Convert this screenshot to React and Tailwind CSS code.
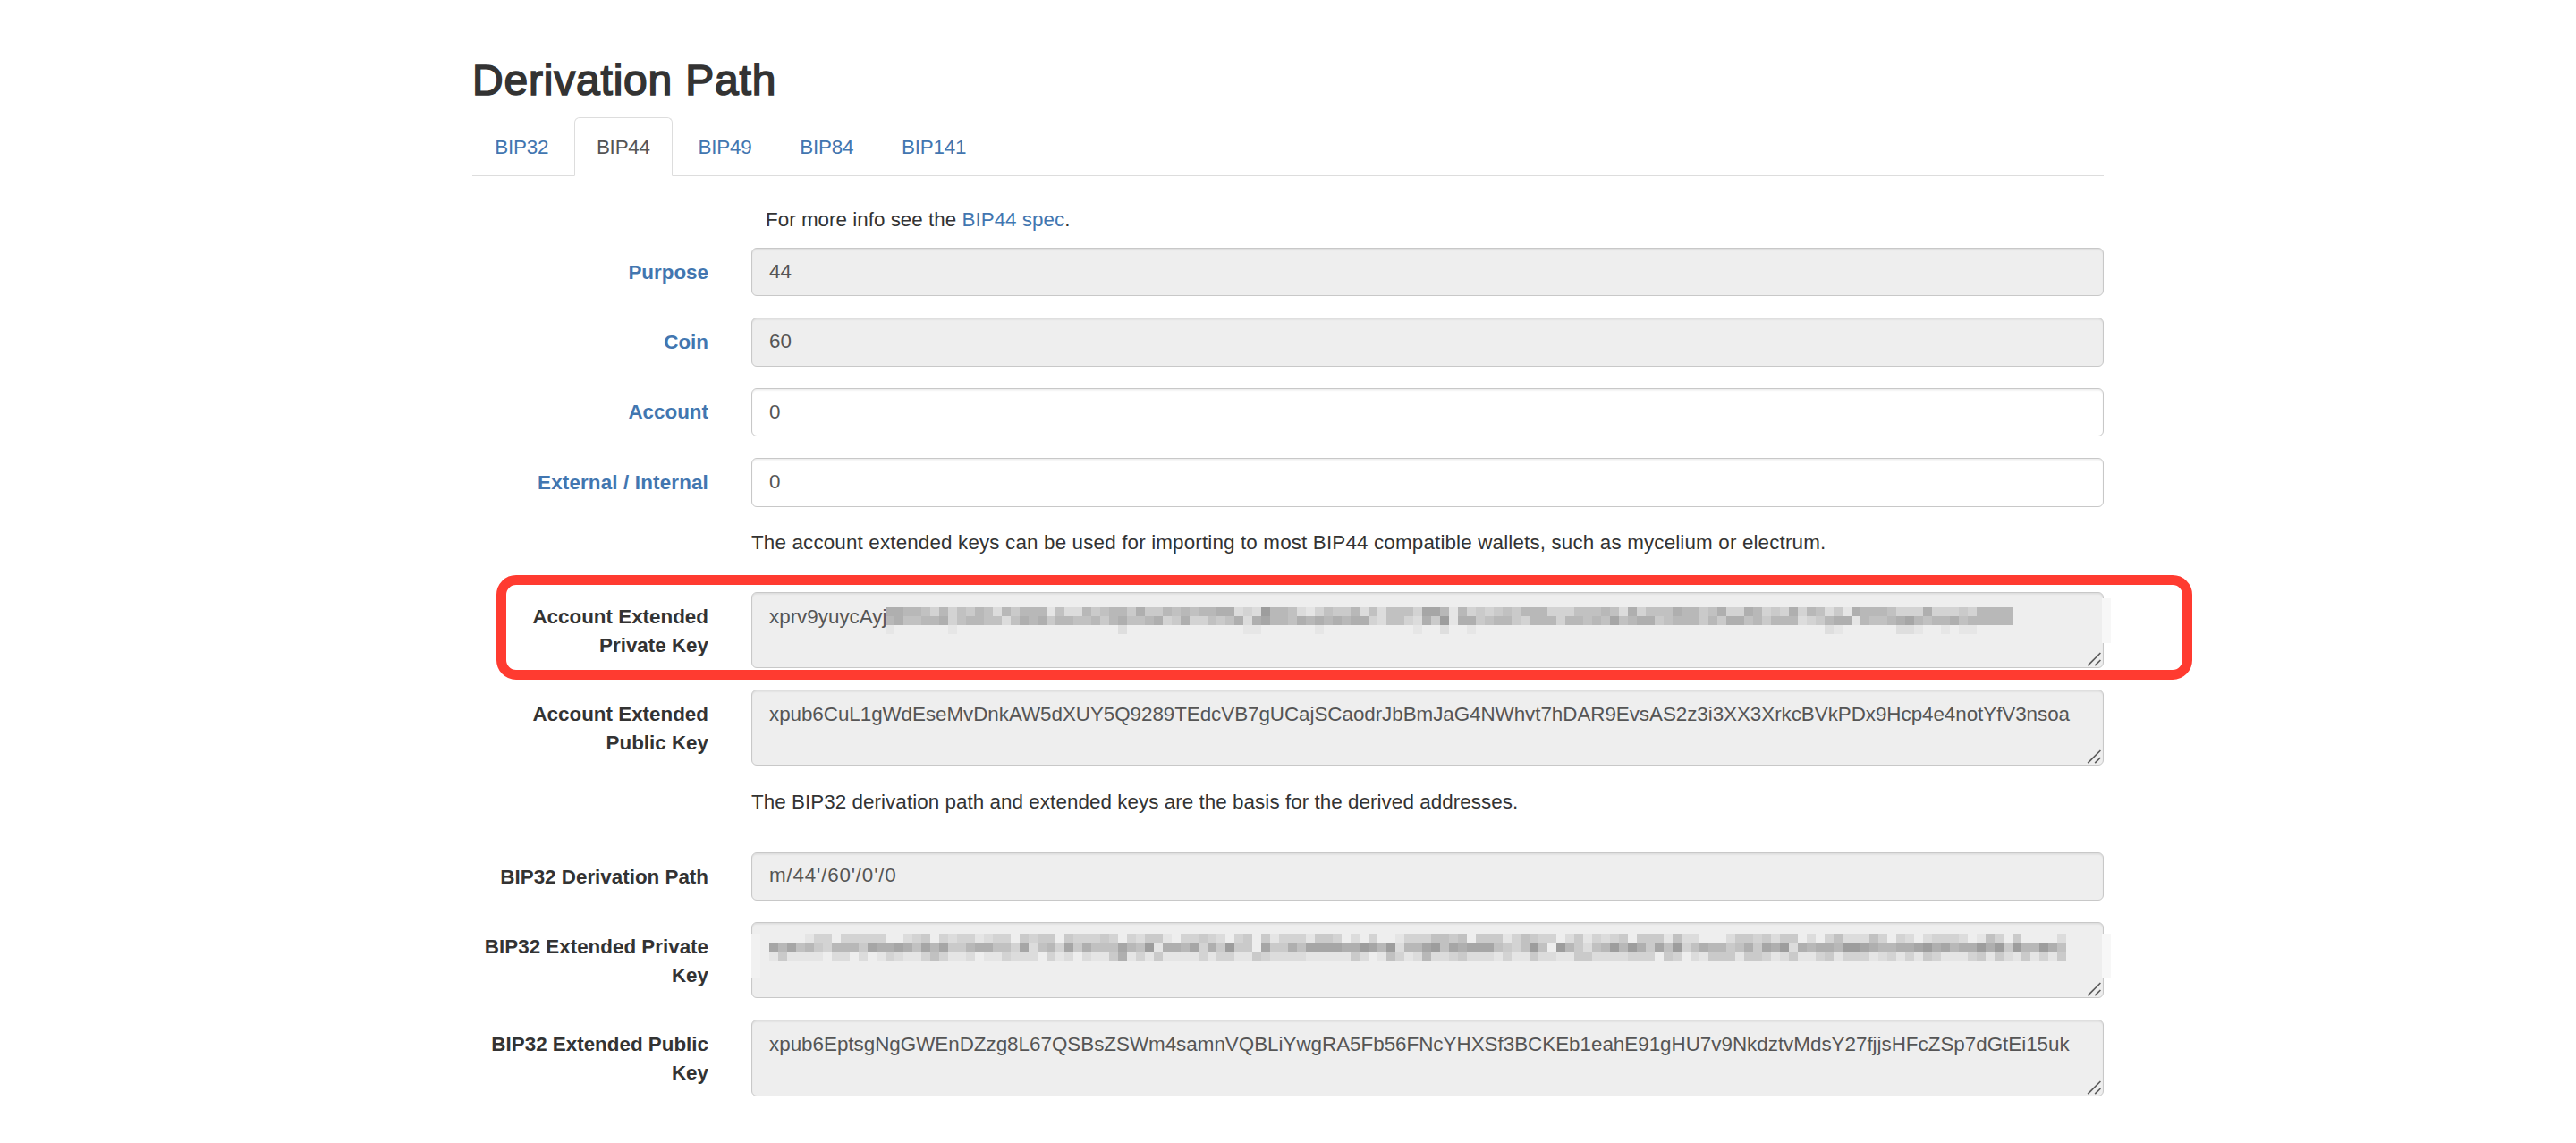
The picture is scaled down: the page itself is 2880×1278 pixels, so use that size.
const CELL = 10;

// Each digit is a darkness level of one pixelated cell; 0 is the field's own grey.
const ACCOUNT_MASK = [
  "776653635465264666152264566" +
    "47446565667723296652135446252555388616343454666333555652735557" +
    "6645733763437365241766653337333436666",
  "675566735665525767466556467" +
    "55673473354572786657676767732553274917745664366636656585677456" +
    "6646477564666234677165567865667566666",
];
const ACCOUNT_TAIL = { 0: 1, 7: 1, 26: 2, 40: 1, 41: 1, 48: 1, 59: 1, 62: 2, 65: 1, 105: 2, 106: 1, 113: 2, 114: 2, 115: 1, 118: 1, 120: 1, 121: 1 };

const BIP32_MASK = [
  "000013303333300234032331233043440433" +
    "343032441033432034041333144302030013335545044413543302413234" +
    "0444152200024434244020352225303202333201530400002",
  "868564366648778758684467755382563847" +
    "555865917768374944084475888877986926689587888543595096425696" +
    "9748593576645748792767769987667789786779794966975",
  "141111022020132113531120113222031202" +
    "114713141111313311432222111114201531262234222131142211442222" +
    "3330430214441443124113413331231314311134142141314",
];

function level(n) {
  const g = 238 - n * 9;
  return `rgb(${g},${g},${g})`;
}

function Mask({ rows, tail, className }) {
  const cols = rows[0].length;
  const height = (rows.length + (tail ? 1 : 0)) * CELL;
  return (
    <svg
      className={"absolute " + className}
      width={cols * CELL}
      height={height}
      shapeRendering="crispEdges"
    >
      {rows.map((row, y) =>
        row.split("").map((n, x) => (
          <rect key={y + "-" + x} x={x * CELL} y={y * CELL} width={CELL} height={CELL} fill={level(Number(n))} />
        ))
      )}
      {tail &&
        Object.entries(tail).map(([x, n]) => (
          <rect key={"t" + x} x={x * CELL} y={rows.length * CELL} width={CELL} height={CELL} fill={level(n * 0.9)} />
        ))}
    </svg>
  );
}

function Grip() {
  return (
    <svg className="absolute bottom-0 right-[1px]" width="17" height="17" viewBox="0 0 17 17" fill="none" stroke="#5c5c5c" strokeWidth="1.7">
      <path d="M1.2 15.2 15.4 1M9.2 15.2 15.4 9" />
    </svg>
  );
}

function Row({ label, link, children }) {
  return (
    <div className="relative mb-6 grid grid-cols-[264px_1512px] gap-12">
      <label className={"text-right font-bold " + (link ? "pt-[11.6px] text-[#4276b0]" : "pt-[12.2px] text-[#333]")}>{label}</label>
      {children}
    </div>
  );
}

const FIELD =
  "relative whitespace-nowrap rounded-[6px] border border-[#c8c8c8] px-[19px] text-[#555] shadow-[inset_0_1.6px_1.6px_rgba(0,0,0,0.075)]";

function Field({ editable, tall, children, className = "" }) {
  return (
    <div className={FIELD + (editable ? " bg-white" : " bg-[#eee]") + (tall ? " h-[85.4px] pt-[11px] " : " h-[54.4px] pt-[9.8px] ") + className}>
      {children}
      {tall && <Grip />}
    </div>
  );
}

const TABS = ["BIP32", "BIP44", "BIP49", "BIP84", "BIP141"];

export default function App() {
  return (
    <div className="h-[1278px] w-[2880px] overflow-hidden bg-white font-['Liberation_Sans',Arial,sans-serif] text-[22.4px] leading-8 text-[#333]">
      <div className="mx-auto w-[1824px] pt-16">
        <h2 className="mb-[14.6px] text-[48px] font-normal leading-[52.8px] tracking-[0.8px] [-webkit-text-stroke:1.6px_#333]">Derivation Path</h2>
        <div className="flex h-[66px] border-b border-[#ddd]">
          {TABS.map((tab) => (
            <a
              key={tab}
              className={
                "mr-[3.2px] h-[66px] rounded-t-[6px] border px-[24.2px] pt-[16.2px] tracking-[-0.2px] " +
                (tab === "BIP141" ? "w-[124px] " : "w-[110.5px] ") +
                (tab === "BIP44" ? "border-[#ddd] border-b-white bg-white text-[#555]" : "border-transparent text-[#4276b0]")
              }
            >
              {tab}
            </a>
          ))}
        </div>

        <p className="mb-[15px] ml-[328px] mt-[32.6px] tracking-[0.02px]">
          For more info see the <a className="text-[#4276b0]">BIP44 spec</a>.
        </p>

        <Row label="Purpose" link><Field>44</Field></Row>
        <Row label="Coin" link><Field>60</Field></Row>
        <Row label="Account" link><Field editable>0</Field></Row>
        <Row label={<span className="tracking-[0.16px]">External / Internal</span>} link><Field editable>0</Field></Row>

        <p className="mb-[39px] ml-[312px] tracking-[0.155px]">
          The account extended keys can be used for importing to most BIP44 compatible wallets, such as mycelium or electrum.
        </p>

        <Row label="Account Extended Private Key">
          <Field tall>
            xprv9yuycAyj
            <Mask rows={ACCOUNT_MASK} tail={ACCOUNT_TAIL} className="left-[149px] top-[16px]" />
            <span className="absolute -right-[9px] top-[6px] h-[50px] w-[10px] bg-[#f7f7f7]" />
          </Field>
          <div className="absolute left-[27px] top-[-19px] h-[117px] w-[1896px] rounded-[22px] border-[11px] border-[#ff3b30]" />
        </Row>
        <Row label="Account Extended Public Key">
          <Field tall className="tracking-[-0.045px]">
            xpub6CuL1gWdEseMvDnkAW5dXUY5Q9289TEdcVB7gUCajSCaodrJbBmJaG4NWhvt7hDAR9EvsAS2z3i3XX3XrkcBVkPDx9Hcp4e4notYfV3nsoa
          </Field>
        </Row>

        <p className="mb-[39.4px] ml-[312px] mt-[24.8px] tracking-[0.055px]">
          The BIP32 derivation path and extended keys are the basis for the derived addresses.
        </p>

        <Row label="BIP32 Derivation Path"><Field className="tracking-[0.82px]">m/44'/60'/0'/0</Field></Row>
        <Row label="BIP32 Extended Private Key">
          <Field tall>
            <Mask rows={BIP32_MASK} className="left-[19px] top-[12px]" />
            <span className="absolute -left-[1px] top-[12px] h-[50px] w-[10px] bg-[#f1f1f1]" />
            <span className="absolute -right-[9px] top-[12px] h-[50px] w-[10px] bg-[#f7f7f7]" />
          </Field>
        </Row>
        <Row label="BIP32 Extended Public Key">
          <Field tall className="tracking-[-0.01px]">
            xpub6EptsgNgGWEnDZzg8L67QSBsZSWm4samnVQBLiYwgRA5Fb56FNcYHXSf3BCKEb1eahE91gHU7v9NkdztvMdsY27fjjsHFcZSp7dGtEi15uk
          </Field>
        </Row>
      </div>
    </div>
  );
}
